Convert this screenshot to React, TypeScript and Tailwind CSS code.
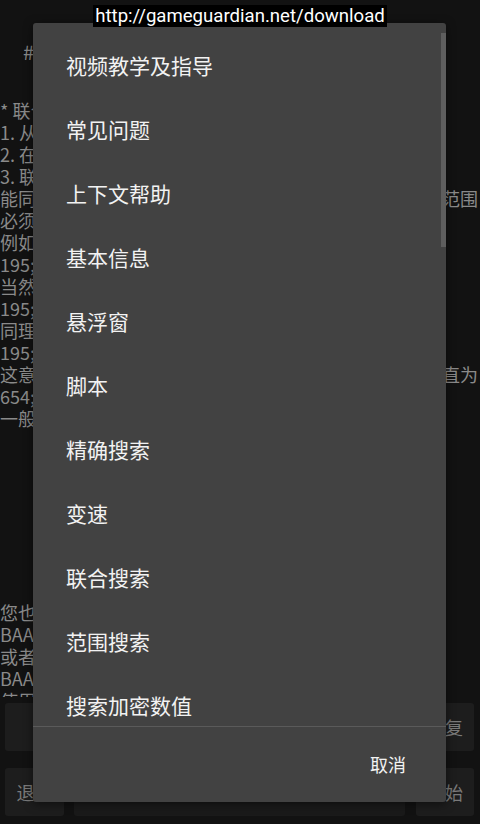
import React from "react";

const cjk = { fontFamily: '"Noto Sans CJK SC", "Noto Sans", sans-serif' };

const lines: [string, string][] = [
  ["* 联合搜索", ""],
  ["1. 从第一个", ""],
  ["2. 在结果中", ""],
  ["3. 联合搜索", ""],
  ["能同时搜索", "范围"],
  ["必须在同一", ""],
  ["例如：", ""],
  ["195;2;3", ""],
  ["当然也可以", ""],
  ["195;2;3", ""],
  ["同理可得", ""],
  ["195;2;3", ""],
  ["这意味着", "直为"],
  ["654;2;3", ""],
  ["一般来说", ""],
];

const lower = ["您也可以", "BAAAA", "或者使用", "BAAAA", "使用范围"];

const items = [
  "视频教学及指导",
  "常见问题",
  "上下文帮助",
  "基本信息",
  "悬浮窗",
  "脚本",
  "精确搜索",
  "变速",
  "联合搜索",
  "范围搜索",
  "搜索加密数值",
];

export default function App() {
  return (
    <div
      className="relative w-[480px] h-[824px] overflow-hidden bg-[#121212] flex flex-col"
      style={cjk}
    >
      {/* background text area */}
      <div className="h-[697px] shrink-0 overflow-hidden text-[18px] text-[#8a8a8a] flex flex-col">
        <div className="h-[99px] shrink-0 pt-[38px] pl-[23px] text-[20px] leading-[28px]">#</div>
        {lines.map(([l, r], i) => (
          <div key={i} className="h-[22px] shrink-0 leading-[22px] flex justify-between whitespace-nowrap pr-[2px]">
            <span>{l}</span>
            <span>{r}</span>
          </div>
        ))}
        <div className="h-[172px] shrink-0" />
        {lower.map((l, i) => (
          <div key={i} className="h-[22px] shrink-0 leading-[22px] whitespace-nowrap">
            {l}
          </div>
        ))}
      </div>

      {/* buttons */}
      <div className="pt-[6px] px-[5px] flex flex-col gap-[17px] text-[18px] text-[#7a7a7a]">
        <div className="h-[48px] flex gap-[11px]">
          <div className="w-[400px] rounded-[3px] bg-[#1d1d1d]" />
          <div className="w-[58px] rounded-[3px] bg-[#1d1d1d] flex items-center justify-center">恢复</div>
        </div>
        <div className="h-[48px] flex gap-[10px]">
          <div className="w-[59px] rounded-[3px] bg-[#1d1d1d] flex items-center justify-center">退出</div>
          <div className="w-[331px] rounded-[3px] bg-[#1a1a1a]" />
          <div className="ml-[1px] w-[58px] rounded-[3px] bg-[#1d1d1d] flex items-center justify-center">开始</div>
        </div>
      </div>

      {/* dialog */}
      <div className="absolute left-[33px] top-[23px] w-[413px] h-[779px] rounded-[3px] bg-[#424242] flex flex-col shadow-[0_2px_10px_rgba(0,0,0,0.5)]">
        <div className="relative h-[703px] overflow-hidden pt-[11px]">
          {items.map((t) => (
            <div key={t} className="h-[64px] flex items-center pl-[33px] text-[21px] text-[#f2f2f2]">
              {t}
            </div>
          ))}
          <div className="absolute right-0 top-[10px] w-[5px] h-[214px] bg-[#5e5e5e]" />
        </div>
        <div className="h-px bg-[#5a5a5a]" />
        <div className="flex-1 flex items-center justify-end pr-[40px] text-[18px] text-[#f2f2f2]">取消</div>
      </div>

      {/* url banner */}
      <div className="absolute top-[5px] inset-x-0 flex justify-center">
        <div
          className="bg-black text-white text-[18.6px] leading-[22px] px-[2px]"
          style={{ fontFamily: 'Roboto, "Noto Sans", sans-serif' }}
        >
          http://gameguardian.net/download
        </div>
      </div>
    </div>
  );
}
